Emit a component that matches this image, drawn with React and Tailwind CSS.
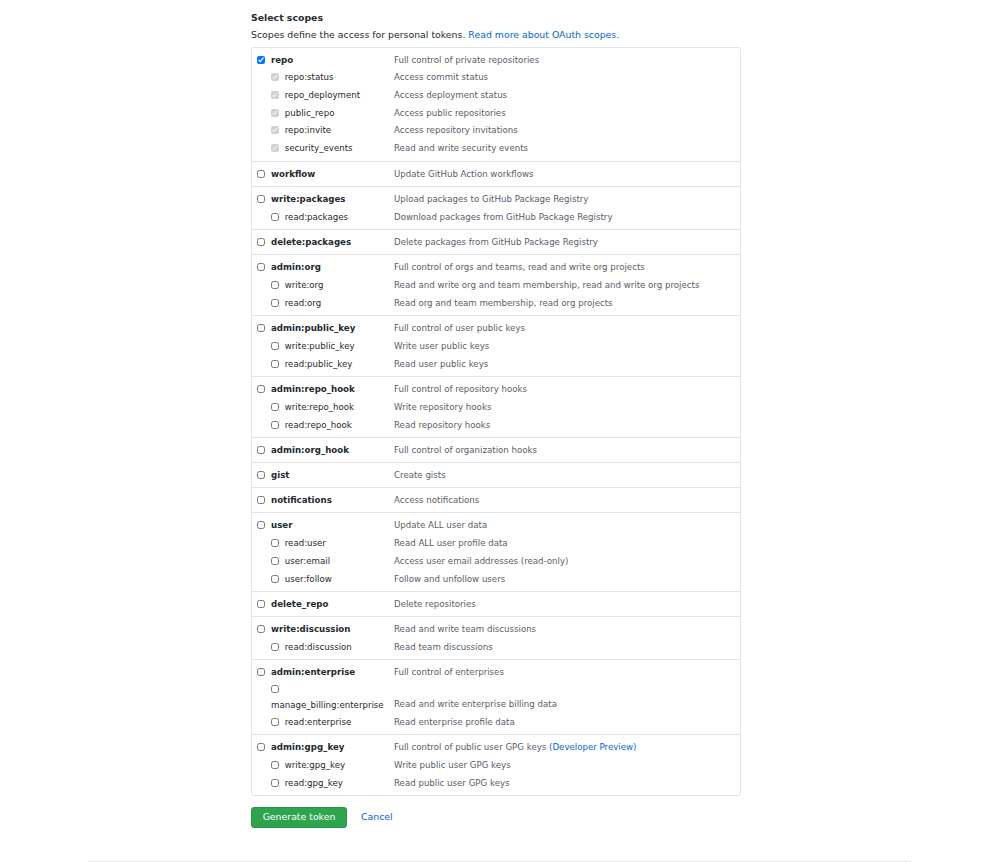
import React from 'react';

const GROUPS = [
  {
    name: 'repo', desc: 'Full control of private repositories', checked: true,
    subs: [
      ['repo:status', 'Access commit status'],
      ['repo_deployment', 'Access deployment status'],
      ['public_repo', 'Access public repositories'],
      ['repo:invite', 'Access repository invitations'],
      ['security_events', 'Read and write security events'],
    ],
  },
  { name: 'workflow', desc: 'Update GitHub Action workflows', subs: [] },
  {
    name: 'write:packages', desc: 'Upload packages to GitHub Package Registry',
    subs: [['read:packages', 'Download packages from GitHub Package Registry']],
  },
  { name: 'delete:packages', desc: 'Delete packages from GitHub Package Registry', subs: [] },
  {
    name: 'admin:org', desc: 'Full control of orgs and teams, read and write org projects',
    subs: [
      ['write:org', 'Read and write org and team membership, read and write org projects'],
      ['read:org', 'Read org and team membership, read org projects'],
    ],
  },
  {
    name: 'admin:public_key', desc: 'Full control of user public keys',
    subs: [
      ['write:public_key', 'Write user public keys'],
      ['read:public_key', 'Read user public keys'],
    ],
  },
  {
    name: 'admin:repo_hook', desc: 'Full control of repository hooks',
    subs: [
      ['write:repo_hook', 'Write repository hooks'],
      ['read:repo_hook', 'Read repository hooks'],
    ],
  },
  { name: 'admin:org_hook', desc: 'Full control of organization hooks', subs: [] },
  { name: 'gist', desc: 'Create gists', subs: [] },
  { name: 'notifications', desc: 'Access notifications', subs: [] },
  {
    name: 'user', desc: 'Update ALL user data',
    subs: [
      ['read:user', 'Read ALL user profile data'],
      ['user:email', 'Access user email addresses (read-only)'],
      ['user:follow', 'Follow and unfollow users'],
    ],
  },
  { name: 'delete_repo', desc: 'Delete repositories', subs: [] },
  {
    name: 'write:discussion', desc: 'Read and write team discussions',
    subs: [['read:discussion', 'Read team discussions']],
  },
  {
    name: 'admin:enterprise', desc: 'Full control of enterprises',
    subs: [
      ['manage_billing:enterprise', 'Read and write enterprise billing data'],
      ['read:enterprise', 'Read enterprise profile data'],
    ],
  },
  {
    name: 'admin:gpg_key', desc: 'Full control of public user GPG keys', preview: true,
    subs: [
      ['write:gpg_key', 'Write public user GPG keys'],
      ['read:gpg_key', 'Read public user GPG keys'],
    ],
  },
];

function Row({ name, desc, sub, checked, disabled, preview }) {
  const wraps = name === 'manage_billing:enterprise';
  const lead = wraps ? 'leading-[16px]' : disabled ? 'leading-[17.75px]' : 'leading-[18px]';
  return (
    <div className="flex items-end">
      <label className={`block w-[137px] shrink-0 ${lead} ${sub ? 'pl-[14px] text-[#24292e]' : 'font-bold text-[#24292e]'}`}>
        <input
          type="checkbox"
          defaultChecked={checked}
          disabled={disabled}
          className="inline-block w-[8px] h-[8px] m-0 mr-[3px] align-[-1px]"
        />{' '}
        {name}
      </label>
      <div className={`${disabled ? 'leading-[17.75px]' : 'leading-[18px]'} text-[#586069]`}>
        {desc}
        {preview && <span className="text-[#0366d6]"> (Developer Preview)</span>}
      </div>
    </div>
  );
}

export default function App() {
  return (
    <div className="min-h-screen bg-white font-['DejaVu_Sans',sans-serif] text-[#24292e]">
      <div className="pl-[251px] pt-[11px]">
        <div className="w-[490px]">
          <h3 className="text-[9.36px] font-bold leading-[14px]">Select scopes</h3>
          <p className="mt-[3px] mb-[5px] text-[9.36px] leading-[14px]">
            Scopes define the access for personal tokens.{' '}
            <a className="text-[#0366d6]">Read more about OAuth scopes.</a>
          </p>

          <div className="border border-[#e1e4e8] rounded-[3px] text-[8.64px]">
            {GROUPS.map((g, i) => (
              <div key={g.name} className={`px-[5px] py-[3px] ${i > 0 ? 'border-t border-[#e1e4e8]' : ''}`}>
                <Row name={g.name} desc={g.desc} checked={g.checked} preview={g.preview} />
                {g.subs.map(([n, d]) => (
                  <Row key={n} name={n} desc={d} sub checked={g.checked} disabled={g.checked} />
                ))}
              </div>
            ))}
          </div>

          <div className="mt-[11px] flex items-center gap-[14px]">
            <button className="h-[21px] w-[96px] rounded-[3px] border border-[#2a9447] bg-[#2ea44f] text-[9.36px] text-white">
              Generate token
            </button>
            <a className="text-[9.36px] text-[#0366d6]">Cancel</a>
          </div>
        </div>
      </div>
      <div className="mx-[88px] mt-[33px] border-t border-[#e1e4e8]" />
    </div>
  );
}
